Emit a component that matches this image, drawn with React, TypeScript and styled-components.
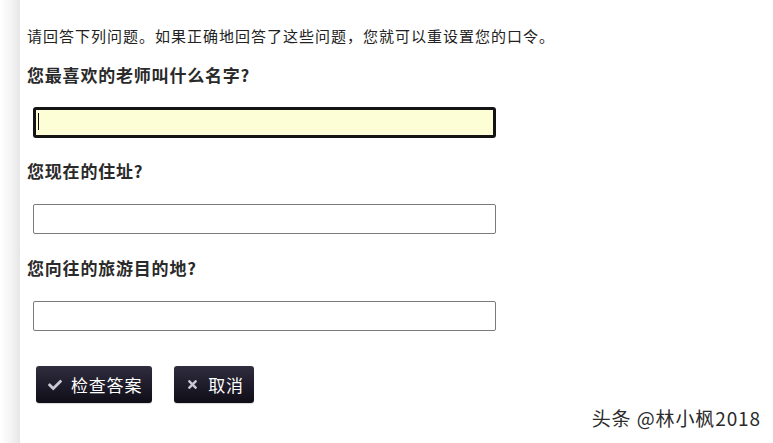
import React from "react";
import styled, { createGlobalStyle } from "styled-components";
import { FaCheck, FaTimes } from "react-icons/fa";

const GlobalStyle = createGlobalStyle`
  html, body {
    margin: 0;
    padding: 0;
    background: #ffffff;
  }
  body {
    font-family: "Noto Sans CJK SC", "Noto Sans", sans-serif;
    color: #333;
  }
`;

const Page = styled.div`
  position: relative;
  display: flex;
  min-height: 443px;
  overflow: hidden;
`;

const Gutter = styled.div`
  width: 20px;
  flex-shrink: 0;
  background: linear-gradient(to right, #ffffff 0%, #f4f4f4 55%, #e6e6e6 100%);
`;

const Main = styled.main`
  flex: 1;
  display: flex;
  flex-direction: column;
  align-items: flex-start;
  padding: 25px 0 0 7px;
  background: #ffffff;
`;

const Intro = styled.p`
  margin: 0;
  font-size: 15px;
  line-height: 22px;
  letter-spacing: 1px;
  color: #222;
`;

const Question = styled.label`
  display: block;
  margin-top: ${(p: { $gap: number }) => p.$gap}px;
  font-size: 17px;
  line-height: 24px;
  font-weight: 700;
  letter-spacing: 0.8px;
  color: #2a2a2a;
`;

const Field = styled.div`
  position: relative;
`;

const Answer = styled.input<{ $active?: boolean }>`
  box-sizing: border-box;
  display: block;
  margin: ${(p) => (p.$active ? "20px" : "21px")} 0 0 6px;
  width: 463px;
  height: ${(p) => (p.$active ? "31px" : "30px")};
  padding: 0 4px;
  font-family: inherit;
  font-size: 15px;
  color: #111;
  background: ${(p) => (p.$active ? "#fdfdd6" : "#ffffff")};
  border: ${(p) => (p.$active ? "3px solid #141414" : "1px solid #7a7a7a")};
  border-radius: ${(p) => (p.$active ? "3px" : "2px")};
  outline: none;
  caret-color: transparent;
`;

const Caret = styled.span`
  position: absolute;
  left: 11px;
  top: 26px;
  width: 1px;
  height: 17px;
  background: #111;
  pointer-events: none;
`;

const Actions = styled.div`
  display: flex;
  gap: 22px;
  margin: 35px 0 0 9px;
`;

const Button = styled.button`
  display: flex;
  align-items: center;
  gap: 9px;
  height: 37px;
  padding: 0 10px 0 12px;
  font-family: inherit;
  font-size: 17px;
  letter-spacing: 0.8px;
  color: #ffffff;
  background: linear-gradient(to bottom, #302e3e 0%, #1d1b29 55%, #0f0e17 100%);
  border: none;
  border-radius: 3px;
  box-shadow: 0 1px 1px rgba(0, 0, 0, 0.15);
  cursor: pointer;

  svg {
    color: #c9c8d3;
    flex-shrink: 0;
  }
`;

const Watermark = styled.div`
  position: absolute;
  right: 12px;
  bottom: 12px;
  font-size: 19px;
  letter-spacing: 0.9px;
  color: #2b2b2b;
  text-shadow: 0 0 2px #fff, 0 0 2px #fff;
`;

export default function App() {
  return (
    <>
      <GlobalStyle />
      <Page>
        <Gutter />
        <Main>
          <Intro>请回答下列问题。如果正确地回答了这些问题，您就可以重设置您的口令。</Intro>
          <Question $gap={16}>您最喜欢的老师叫什么名字?</Question>
          <Field>
            <Answer $active />
            <Caret />
          </Field>
          <Question $gap={21}>您现在的住址?</Question>
          <Answer />
          <Question $gap={22}>您向往的旅游目的地?</Question>
          <Answer />
          <Actions>
            <Button type="button">
              <FaCheck size={14} />
              检查答案
            </Button>
            <Button type="button">
              <FaTimes size={13} />
              取消
            </Button>
          </Actions>
        </Main>
        <Watermark>头条 @林小枫2018</Watermark>
      </Page>
    </>
  );
}
